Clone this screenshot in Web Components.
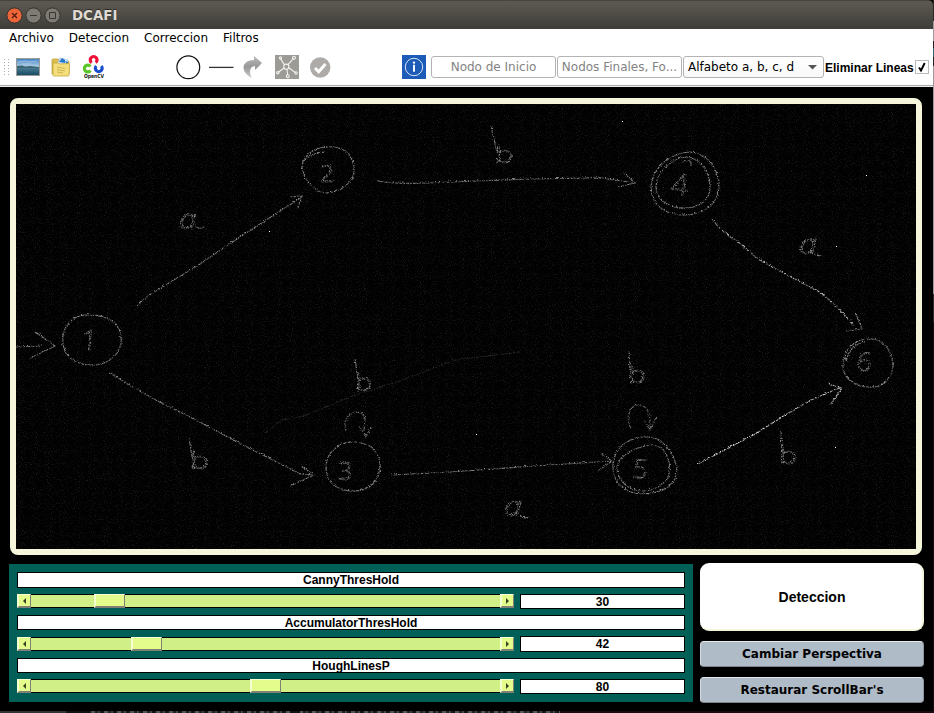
<!DOCTYPE html>
<html lang="es"><head><meta charset="utf-8"><title>DCAFI</title>
<style>
html,body{margin:0;width:934px;height:713px;overflow:hidden;background:#000}
</style></head><body><dcafi-app></dcafi-app>
<script>
const define=(name,css,html,setup)=>customElements.define(name,class extends HTMLElement{
  constructor(){super();this.attachShadow({mode:'open'}).innerHTML='<style>*{box-sizing:border-box}svg{display:block}'+css+'</style>'+(typeof html==='function'?'':html);}
  connectedCallback(){if(this.ready)return;this.ready=true;if(typeof html==='function')this.shadowRoot.innerHTML+=html(this);if(setup)setup(this,this.shadowRoot);}
});

define('title-bar',`:host{display:flex;height:29px;padding:1px 0 0 6px;align-items:center;background:linear-gradient(#2f2e2b 0,#5c5951 1px,#59564f 5px,#3f3e39 28px);font:bold 13.4px "DejaVu Sans",sans-serif;color:#dfdbd2;border-radius:0 5px 0 0}
svg{margin-top:1px}span{margin:1px 0 0 11px;text-shadow:0 -1px #2b2a27}`,
`<svg width="55" height="18"><g stroke="#33322e"><circle cx="8.5" cy="8.5" r="7.6" fill="#ed6539"/><circle cx="27.5" cy="8.5" r="7.6" fill="#7d7b74"/><circle cx="46.5" cy="8.5" r="7.6" fill="#7d7b74"/></g><path d="M6 6l5 5M11 6l-5 5" stroke="#54200f" stroke-width="1.4"/><path d="M24 8.5h7M43.5 5.5h6v6h-6z" stroke="#383732" fill="none"/></svg><span><slot></slot></span>`);

define('menu-bar',`:host{display:flex;height:21px;padding:1px 0 0 9px;gap:15px;background:#fff;font:12px/16px "DejaVu Sans",sans-serif;color:#000}`,`<slot></slot>`);

define('tool-icon',`:host{display:block;flex:none}`,el=>({
grip:`<svg width="6" height="18"><path d="M.5 1v17M4.5 1v17" stroke="#aaa" stroke-dasharray="1 2" fill="none"/></svg>`,
photo:`<svg width="24" height="19"><defs><linearGradient id="s" x2="0" y2="1"><stop stop-color="#3f7ec2"/><stop offset=".45" stop-color="#a9cce6"/></linearGradient><linearGradient id="w" x2="0" y2="1"><stop stop-color="#487b92"/><stop offset="1" stop-color="#184a63"/></linearGradient></defs><rect x=".5" y=".5" width="23" height="17" fill="url(#s)" stroke="#9b9b98"/><path d="M1 10h22v7H1z" fill="url(#w)"/><path d="M1 8l5-.5 3 1 5-.5 9 1v1H1z" fill="#3e6573"/><path d="M2 4l7-1 5 1 7-1M6 6h9" stroke="#c7ddec" fill="none" opacity=".5"/></svg>`,
folder:`<svg width="20" height="20"><path d="M1 3q0-1 1-1h5l2 2h8q1 0 1 1v12H1z" fill="#dcbf4d" stroke="#b99a32" stroke-width=".7"/><path d="M6 7l3-6 8 2-1 6z" fill="#dceafb" stroke="#8eb4da" stroke-width=".6"/><path d="M8 5l3-4 3 2v3zM14 4l3 1-1 3z" fill="#2579c9"/><path d="M2 6h5l2 1 9-.5q.6 0 .6.7L18 18q0 1-1 1H3q-1 0-1-1z" fill="#f4df7c" stroke="#c7a83c" stroke-width=".8"/><path d="M6 10l8 1.5M6 12.5l8 1.5M6 15l6 1" stroke="#cfb654" fill="none"/></svg>`,
opencv:`<svg width="22" height="27"><g fill="none" stroke-width="3.2" transform="translate(0 1)"><path d="M8.7 7.7A3.4 3.4 0 1 1 12.7 7.6" stroke="#ee1237"/><path d="M8.5 12A3.4 3.4 0 1 0 8.5 16" stroke="#5cc527" transform="translate(-1 -.5)"/><path d="M13.2 11A3.4 3.4 0 1 0 18.3 11" stroke="#174dce"/></g><text x="1" y="24" textLength="20" lengthAdjust="spacingAndGlyphs" font-family="DejaVu Sans,sans-serif" font-weight="bold" font-size="5.6" fill="#111">OpenCV</text></svg>`,
circle:`<svg width="25" height="25"><circle cx="12.3" cy="12.3" r="11.4" fill="#fff" stroke="#111" stroke-width="1.2"/></svg>`,
line:`<svg width="25" height="3"><path d="M0 1.4h24.5" stroke="#333" stroke-width="1.3"/></svg>`,
redo:`<svg width="20" height="24"><defs><linearGradient id="r" x2="0" y2="1"><stop stop-color="#b0b0b0"/><stop offset=".5" stop-color="#858585"/><stop offset="1" stop-color="#c5c5c5"/></linearGradient></defs><path d="M11 1l8 7-7 7v-4q-5 0-5 6 0 3 2 6Q1 19 .5 13 1 5 11 5z" fill="url(#r)" opacity=".85"/></svg>`,
graph:`<svg width="24" height="24"><path fill="#9c9b96" d="M0 0h24v24H0z"/><g fill="none" stroke="#f2f2f0" stroke-width="1.1"><circle cx="11.3" cy="11.7" r="2.6"/><path d="M9.4 9.8L5.5 3.6M13 9.7L18.5 3.4M9 13L3.3 17.2M13.8 12.8L20.5 17.7M12 14.2l.7 6"/><circle cx="5.5" cy="3" r="1.1"/><circle cx="19" cy="2.7" r="1.4"/><circle cx="2.8" cy="17.8" r="1.2"/><circle cx="21" cy="18" r="1.2"/><circle cx="12.8" cy="21.2" r="1.4"/></g></svg>`,
check:`<svg width="21" height="21"><circle cx="10.2" cy="10.5" r="10.2" fill="#adaaa7"/><path d="M5 11l3.7 3.7L15.5 7" stroke="#fff" stroke-width="3" fill="none"/></svg>`,
info:`<svg width="24" height="24"><path fill="#1c5cb8" d="M0 0h24v24H0z"/><circle cx="12" cy="12" r="8.7" fill="none" stroke="#d8e5f6"/><path d="M12 9.8v7" stroke="#fff" stroke-width="1.9" fill="none"/><circle cx="12" cy="7.6" r="1.2" fill="#fff"/></svg>`
}[el.getAttribute('name')]));

define('text-field',`:host{display:block;width:125px;height:22px;border:1px solid #b3b3b3;border-radius:3px;background:#fff;color:#838383;font:12px/20px "DejaVu Sans",sans-serif;text-align:center;white-space:nowrap;flex:none}`,`<slot></slot>`);
define('combo-box',`:host{display:flex;align-items:center;justify-content:space-between;width:141px;height:22px;border:1px solid #b3b3b3;border-radius:3px;background:linear-gradient(#fff,#f8f8f8);font:12px/20px "DejaVu Sans",sans-serif;padding:0 6px 0 4px;color:#000;white-space:nowrap;flex:none}`,`<slot></slot><svg width="9" height="5"><path d="M0 0h9L4.5 4.5z" fill="#555"/></svg>`);
define('check-option',`:host{display:flex;align-items:center;gap:2px;font:bold 12px/16px "Liberation Sans",Arial,sans-serif;color:#000;white-space:nowrap;flex:none}svg{flex:none}span{padding-top:2px;width:88px}`,`<span><slot></slot></span><svg width="14" height="14"><rect x=".5" y=".5" width="13" height="13" fill="#fff" stroke="#bbb"/><path d="M4 7.5l2 3L9.7 3" stroke="#000" stroke-width="1.9" fill="none"/></svg>`);

define('tool-bar',`:host{display:flex;align-items:center;height:37px;padding:0 0 1px 4px;background:#fff;border-bottom:1px solid #aaa;box-shadow:0 1px #eee}
.a{display:flex;align-items:center;width:398px;flex:none}.f{display:flex;align-items:center;gap:1px}.f tool-icon{margin-right:4px}`,
`<div class="a"><tool-icon name="grip"></tool-icon><tool-icon name="photo" style="margin-left:6px"></tool-icon><tool-icon name="folder" style="margin-left:11px"></tool-icon><tool-icon name="opencv" style="margin-left:12px"></tool-icon><tool-icon name="circle" style="margin-left:71px"></tool-icon><tool-icon name="line" style="margin-left:8px"></tool-icon><tool-icon name="redo" style="margin-left:9px"></tool-icon><tool-icon name="graph" style="margin-left:12px"></tool-icon><tool-icon name="check" style="margin-left:11px"></tool-icon></div>
<div class="f"><tool-icon name="info"></tool-icon><text-field>Nodo de Inicio</text-field><text-field>Nodos Finales, Fo...</text-field><combo-box>Alfabeto a, b, c, d</combo-box><check-option>Eliminar Lineas</check-option></div>`);

define('automaton-view',`:host{display:block;width:912px;height:457px;border:6px solid #f5f5dc;border-radius:8px;background:#f5f5dc}svg{background:#010101}text{font-family:"Open Sans","Noto Sans",sans-serif;font-weight:300;fill:none;stroke:#999;stroke-width:.65}`,
`<svg width="900" height="445" viewBox="16 104 900 445"><defs>
<filter id="grain" x="0" y="0" width="100%" height="100%" color-interpolation-filters="sRGB"><feTurbulence type="fractalNoise" baseFrequency=".93" numOctaves="2" seed="8"/><feColorMatrix values=".35 0 0 0 .02  0 .35 0 0 .02  0 0 .35 0 .02  1.9 1.9 1.4 0 -2.65"/></filter>
<filter id="pencil" filterUnits="userSpaceOnUse" x="16" y="104" width="900" height="445" color-interpolation-filters="sRGB"><feTurbulence type="fractalNoise" baseFrequency=".75" numOctaves="2" seed="3" result="n"/><feDisplacementMap in="SourceGraphic" in2="n" scale="3.2" xChannelSelector="R" yChannelSelector="G" result="d"/><feColorMatrix in="n" values="0 0 0 0 1 0 0 0 0 1 0 0 0 0 1 0 3.6 0 0 -1.15" result="m"/><feComposite in="d" in2="m" operator="in"/></filter></defs>
<rect x="16" y="104" width="900" height="445" filter="url(#grain)" opacity=".42"/>
<g filter="url(#pencil)" fill="none" stroke="#868686" stroke-width="1.25">
<g>
<path d="M63 335C67 319 79 314 91 315C107 315 120 323 121 337C123 353 109 364 95 365C77 366 60 357 63 335Z"/>
<path d="M302 166C304 153 318 146 333 147C346 148 350 155 353 163C358 177 347 190 328 193C315 193 303 181 302 166M304 161Q314 152 324 152"/>
<path d="M326 468C326 451 341 441 355 442C371 443 380 453 380 465C380 481 370 491 353 491C339 491 326 484 326 468Z"/>
<path d="M651 187C652 167 672 152 690 152C708 153 717 169 719 183C720 204 704 215 683 215C664 215 651 204 651 187ZM656 187C656 170 675 157 687 157C702 159 710 173 710 187C710 201 699 208 684 208C669 208 656 200 656 187ZM682 162L691 160L691 166"/>
<path d="M613 469C612 450 627 437 644 437C664 435 674 455 677 468C678 484 664 493 644 494C626 494 614 484 613 469ZM617 469C617 455 637 446 653 445C666 447 671 460 669 474C667 484 655 491 640 491C629 490 617 480 617 469Z"/>
<path d="M843 366C843 350 854 338 873 339C886 341 893 354 893 367C891 381 880 388 868 387C853 386 843 377 843 366ZM846 363C847 352 855 343 865 342"/>
</g>
<path d="M16 347L41 346M35 332L55 346L29 359M137 307Q142 300 151 294L200 264L246 233L302 197M290 197L302 196L297 210"/>
<path d="M377 181Q399 185 450 182L530 179L600 178L634 183M624 173L635 183L618 187"/>
<path d="M110 373Q147 397 190 417L245 446L300 474L314 475M302 467L314 475L290 486M391 475L450 472L520 467L612 461M601 454L612 461L598 471"/>
<g stroke="#b8b8b8"><path d="M712 219Q721 232 738 242L758 259L783 273L818 291Q837 305 854 326"/><path d="M698 464L755 434L782 417L811 400L842 387" stroke="#ddd"/><path d="M828 384L842 388L830 405"/></g>
<path d="M855 312L862 329L846 331"/><path stroke="#707070" d="M346 431C340 414 362 405 365 419L364 431M359 426L366 437L371 427M631 429C624 413 632 404 641 405C651 409 650 420 650 430M644 420L650 430L656 418"/>
<path d="M355 359L358 379M491 126L497 153M189 437L192 457M629 351L630 371M781 431L782 453" stroke="#808080"/>
<path d="M265 433L282 420L304 416L350 397L400 381L455 360L520 352" stroke="#383838" stroke-width=".8"/>
<text x="81" y="351" font-size="29" transform="rotate(4 90 340)">1</text><text x="320" y="182" font-size="24">2</text><text x="338" y="480" font-size="25">3</text><text x="671" y="196" font-size="31" transform="rotate(8 680 185)">4</text><text x="633" y="478" font-size="26" transform="rotate(6 640 469)">5</text><text x="857" y="371" font-size="26" transform="rotate(8 863 362)">6</text>
<g font-style="italic" font-size="27"><text x="179" y="229" textLength="18" lengthAdjust="spacingAndGlyphs">a</text><text x="799" y="254" textLength="18" lengthAdjust="spacingAndGlyphs">a</text><text x="504" y="516" textLength="18" lengthAdjust="spacingAndGlyphs">a</text></g><path d="M195 226q4 4 9 1M814 253q3 4 8 2M520 516q4 3 10 1"/>
<g font-size="23"><text x="495" y="163" textLength="18" lengthAdjust="spacingAndGlyphs">b</text><text x="355" y="391" textLength="17" lengthAdjust="spacingAndGlyphs">b</text><text x="190" y="469" textLength="19" lengthAdjust="spacingAndGlyphs">b</text><text x="628" y="383" textLength="18" lengthAdjust="spacingAndGlyphs">b</text><text x="779" y="464" textLength="18" lengthAdjust="spacingAndGlyphs">b</text></g></g>
<g fill="#fff"><path d="M622 121h1v1h-1zM269 231h1v1h-1zM476 434h1v1h-1zM836 246h1v1h-1zM866 175h1v1h-1zM835 447h1v1h-1z"/></g></svg>`);

define('caption-box',`:host{display:flex;align-items:center;justify-content:center;border:1px solid #000;background:#fff;font:bold 12px/13px "Liberation Sans",Arial,sans-serif;color:#000;overflow:hidden}span{position:relative;top:.5px}`,`<span><slot></slot></span>`);

define('scroll-bar',`:host{display:grid;grid-template-columns:14px 1fr 14px;height:14px;background:#d0ef87;align-self:start}
.b{background:#e4fc8c;border:2px solid;border-color:#f4ffd2 #808174 #808174 #f4ffd2;border-width:1px 1px 2px 2px;display:grid;place-items:center}.t{border:solid #000;border-width:1px 0;display:flex}.h{width:31px;margin:-1px 0;height:14px}.b svg{margin-right:1px}`,
el=>`<div class="b"><svg width="3" height="6"><path d="M3 0v6L0 3z" fill="#394122"/></svg></div><div class="t"><div class="b h" style="margin-left:${el.getAttribute('value')}px"></div></div><div class="b"><svg width="3" height="6"><path d="M0 0v6L3 3z" fill="#394122"/></svg></div>`);

define('threshold-panel',`:host{display:grid;width:684px;height:138px;background:#005f56;padding:8px;grid-template-columns:497px 165px;grid-template-rows:16px 15px 15px 16px 15px 15px;gap:6px}.w{grid-column:1/3}`,
`<caption-box class="w">CannyThresHold</caption-box><scroll-bar value="63"></scroll-bar><caption-box>30</caption-box><caption-box class="w">AccumulatorThresHold</caption-box><scroll-bar value="100" style="margin-top:1px"></scroll-bar><caption-box>42</caption-box><caption-box class="w">HoughLinesP</caption-box><scroll-bar value="219"></scroll-bar><caption-box>80</caption-box>`);

define('action-button',`:host{display:flex;align-items:center;justify-content:center;height:26px;border-radius:4px;background:#afbbc7;border:1px solid;border-color:#e5e9ed #8d969f #7c848c #d6dce2;font:bold 12px/16px "DejaVu Sans",sans-serif;color:#000}
:host([primary]){height:68px;border-radius:9px;background:#fff;border:solid #f5f5dc;border-width:0 2px 2px 0;padding:2px 0 0 2px;font:bold 14px/18px "Liberation Sans",Arial,sans-serif}`,`<slot></slot>`);

define('dcafi-app',`:host{display:grid;grid-template-columns:933px 1px;grid-template-rows:711px 2px;width:934px;height:713px;background:#000;overflow:hidden}
.edge{background:linear-gradient(#2b2926 0 21px,#9b9b9b 21px 41px,#222 41px 48px,#316276 48px 57px,#222 57px 66px,#999 66px 294px,#2b302e 294px 322px,#190a14 322px)}
main{padding:12px 0 0 10px}.controls{display:flex;gap:7px;margin:8px 0 0 -1px}.actions{width:224px;display:grid;gap:10px;align-content:start;margin-top:0}threshold-panel{margin-top:1px}
.under{grid-column:1/3;background:linear-gradient(90deg,#333 0 66px,#111 66px 90px,transparent 90px 290px,#111 290px 300px,transparent 300px 560px,#190a14 560px),repeating-linear-gradient(90deg,#555 0 4px,#222 4px 7px,#444 7px 9px,#151515 9px 13px)}`,
`<div><title-bar style="box-sizing:border-box">DCAFI</title-bar><menu-bar style="box-sizing:border-box"><span>Archivo</span><span>Deteccion</span><span>Correccion</span><span>Filtros</span></menu-bar><tool-bar style="box-sizing:border-box;height:36px"></tool-bar>
<main><automaton-view style="box-sizing:border-box"></automaton-view><div class="controls"><threshold-panel style="box-sizing:border-box"></threshold-panel><div class="actions"><action-button primary style="box-sizing:border-box">Deteccion</action-button><action-button style="box-sizing:border-box">Cambiar Perspectiva</action-button><action-button style="box-sizing:border-box">Restaurar ScrollBar's</action-button></div></div></main></div><div class="edge"></div><div class="under"></div>`);
</script></body></html>
